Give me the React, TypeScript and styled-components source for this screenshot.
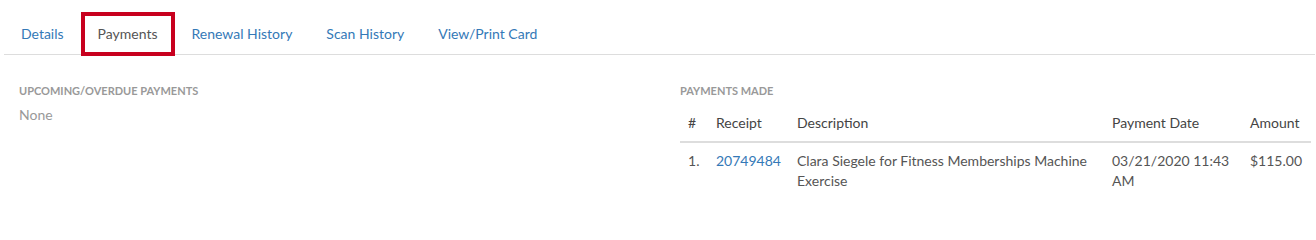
import { useState } from "react";
import styled, { createGlobalStyle } from "styled-components";

const GlobalStyle = createGlobalStyle`
  html, body {
    margin: 0;
    padding: 0;
    background: #fff;
    overflow: hidden;
  }
  body {
    font-family: Lato, "Liberation Sans", Arial, sans-serif;
    font-size: 14px;
    line-height: 20px;
    color: #555;
  }
`;

const StyledPage = styled.div`
  width: 1326px;
  padding: 12px 0 0 4px;
  box-sizing: border-box;
`;

const StyledTabBar = styled.ul`
  display: flex;
  list-style: none;
  margin: 0;
  padding: 0;
  width: 1311px;
  border-bottom: 1px solid #ddd;
`;

const StyledTab = styled.li<{ $active?: boolean }>`
  margin-bottom: -2px;

  a {
    display: block;
    padding: 8px 13px;
    border: 4px solid ${(p) => (p.$active ? "#c8001e" : "transparent")};
    color: ${(p) => (p.$active ? "#555" : "#3479b7")};
    text-decoration: none;
    cursor: pointer;
  }
`;

const StyledColumns = styled.div`
  display: flex;
  padding-top: 28px;
`;

const StyledColumn = styled.div`
  flex: 0 0 661px;
  padding: 0 15px;
  box-sizing: border-box;
`;

const StyledSectionTitle = styled.h6`
  margin: 0 0 7px;
  font-size: 11px;
  line-height: 15px;
  font-weight: 700;
  text-transform: uppercase;
  color: #999;
`;

const StyledEmpty = styled.p`
  margin: 0;
  color: #999;
`;

const StyledTable = styled.table`
  width: 631px;
  margin-top: 1px;
  border-collapse: collapse;

  th {
    padding: 8px;
    text-align: left;
    font-weight: 400;
    color: #444;
    border-bottom: 2px solid #ddd;
  }

  td {
    padding: 8px;
    vertical-align: top;
    color: #555;
  }
`;

const StyledReceiptLink = styled.a`
  color: #3479b7;
  text-decoration: none;
`;

const TABS = ["Details", "Payments", "Renewal History", "Scan History", "View/Print Card"];

const PAYMENTS = [
  {
    receipt: "20749484",
    description: "Clara Siegele for Fitness Memberships Machine Exercise",
    date: "03/21/2020 11:43 AM",
    amount: "$115.00",
  },
];

const App = () => {
  const [activeTab, setActiveTab] = useState("Payments");

  return (
    <>
      <GlobalStyle />
      <StyledPage>
        <StyledTabBar>
          {TABS.map((tab) => (
            <StyledTab key={tab} $active={tab === activeTab}>
              <a onClick={() => setActiveTab(tab)}>{tab}</a>
            </StyledTab>
          ))}
        </StyledTabBar>

        <StyledColumns>
          <StyledColumn>
            <StyledSectionTitle>Upcoming/Overdue Payments</StyledSectionTitle>
            <StyledEmpty>None</StyledEmpty>
          </StyledColumn>
          <StyledColumn>
            <StyledSectionTitle>Payments Made</StyledSectionTitle>
            <StyledTable>
              <colgroup>
                <col style={{ width: 28 }} />
                <col style={{ width: 81 }} />
                <col style={{ width: 315 }} />
                <col style={{ width: 138 }} />
                <col style={{ width: 69 }} />
              </colgroup>
              <thead>
                <tr>
                  <th>#</th>
                  <th>Receipt</th>
                  <th>Description</th>
                  <th>Payment Date</th>
                  <th>Amount</th>
                </tr>
              </thead>
              <tbody>
                {PAYMENTS.map((payment, index) => (
                  <tr key={payment.receipt}>
                    <td>{index + 1}.</td>
                    <td>
                      <StyledReceiptLink href="#">{payment.receipt}</StyledReceiptLink>
                    </td>
                    <td>{payment.description}</td>
                    <td>{payment.date}</td>
                    <td>{payment.amount}</td>
                  </tr>
                ))}
              </tbody>
            </StyledTable>
          </StyledColumn>
        </StyledColumns>
      </StyledPage>
    </>
  );
};

export default App;
